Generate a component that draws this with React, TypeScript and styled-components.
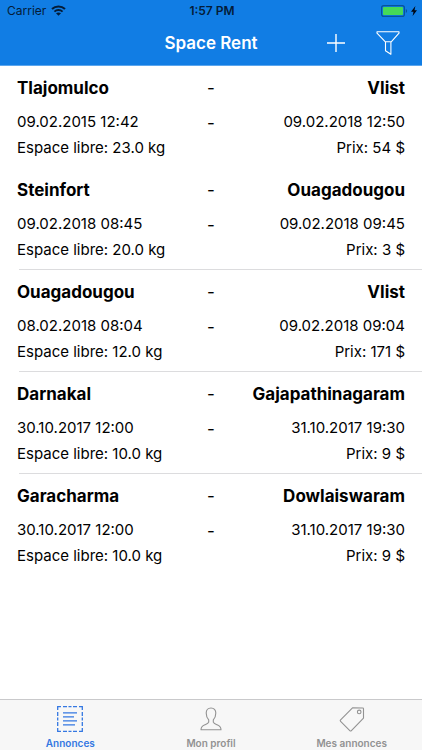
import React from "react";
import styled, { createGlobalStyle } from "styled-components";

const GlobalStyle = createGlobalStyle`
  *, *::before, *::after { box-sizing: border-box; }
  body {
    margin: 0;
    background: #ffffff;
    color: #000000;
    font-family: Inter, "Liberation Sans", sans-serif;
  }
`;

const Screen = styled.div`
  display: flex;
  flex-direction: column;
  height: 100vh;
`;

const Header = styled.header`
  flex: none;
  background: #117de4;
  border-bottom: 1px solid #5ba6ee;
`;

const StatusBar = styled.div`
  display: grid;
  grid-template-columns: 1fr auto 1fr;
  align-items: center;
  height: 21px;
  padding: 0 5px 0 7px;
  color: #041c38;
  font-size: 12px;
  line-height: 20px;
`;

const StatusGroup = styled.div<{ $end?: boolean }>`
  display: flex;
  align-items: center;
  gap: ${(p) => (p.$end ? 3 : 5)}px;
  justify-content: ${(p) => (p.$end ? "flex-end" : "flex-start")};
`;

const Clock = styled.time`
  font-weight: 600;
`;

const NavBar = styled.div`
  display: grid;
  grid-template-columns: 1fr auto 1fr;
  align-items: center;
  height: 44px;
  padding: 0 20px;
`;

const Title = styled.h1`
  grid-column: 2;
  margin: 0;
  color: #ffffff;
  font-size: 17px;
  font-weight: 600;
  line-height: 24px;
`;

const Actions = styled.div`
  display: flex;
  justify-content: flex-end;
  gap: 24px;
`;

const IconButton = styled.button`
  display: flex;
  align-items: center;
  justify-content: center;
  width: 28px;
  height: 32px;
  padding: 0;
  border: 0;
  background: none;
  color: #ffffff;
  cursor: pointer;
`;

const List = styled.ul`
  flex: 1;
  min-height: 0;
  overflow: auto;
  margin: 0;
  padding: 0;
  list-style: none;
`;

const Item = styled.li<{ $divided: boolean }>`
  padding: 11px 17px 9px;
  border-bottom: 1px solid;
  border-image: linear-gradient(
      to right,
      transparent 20px,
      ${(p) => (p.$divided ? "#dcdcde" : "transparent")} 20px
    ) 1;
`;

const Line = styled.div<{ $gap?: number }>`
  display: grid;
  grid-template-columns: 1fr auto 1fr;
  margin-top: ${(p) => p.$gap ?? 0}px;
  font-size: 15px;
  line-height: 20px;
`;

const Place = styled.strong<{ $end?: boolean }>`
  font-size: 17px;
  font-weight: 700;
  line-height: 22px;
  text-align: ${(p) => (p.$end ? "right" : "left")};
`;

const Detail = styled.span<{ $end?: boolean }>`
  grid-column: ${(p) => (p.$end ? 3 : 1)};
  text-align: ${(p) => (p.$end ? "right" : "left")};
`;

const Dash = styled.span`
  font-size: 17px;
  line-height: 22px;
`;

const TabBar = styled.nav`
  display: grid;
  grid-template-columns: repeat(3, 1fr);
  flex: none;
  height: 51px;
  border-top: 1px solid #c9c9cb;
  background: #f7f7f7;
`;

const Tab = styled.button<{ $active?: boolean }>`
  display: flex;
  flex-direction: column;
  align-items: center;
  gap: 4px;
  padding: 6px 0 0;
  border: 0;
  background: none;
  color: ${(p) => (p.$active ? "#3478e2" : "#929292")};
  font-family: inherit;
  font-size: 10px;
  font-weight: 600;
  line-height: 14px;
  cursor: pointer;
`;

const WifiIcon = () => (
  <svg width="15" height="11" viewBox="0 0 15 11" fill="none" stroke="currentColor" aria-hidden="true">
    <path d="M1 4C4.6.7 10.4.7 14 4" strokeWidth="2.1" />
    <path d="M3.4 6.6c2.3-2.1 5.9-2.1 8.2 0" strokeWidth="1.9" />
    <path d="M7.5 10.8 5 8.3c1.4-1.2 3.6-1.2 5 0z" fill="currentColor" stroke="none" />
  </svg>
);

const BatteryIcon = () => (
  <svg width="27" height="12" viewBox="0 0 27 12" aria-hidden="true">
    <rect x=".6" y=".6" width="22.8" height="10.8" rx="2.2" fill="none" stroke="#07539c" strokeWidth="1.2" />
    <rect x="2" y="2" width="20" height="8" rx=".8" fill="#45d957" />
    <path d="M24.8 4v4c1.7-.6 1.7-3.4 0-4z" fill="#07539c" />
  </svg>
);

const BoltIcon = () => (
  <svg width="6" height="10" viewBox="0 0 6 10" fill="#000814" aria-hidden="true">
    <path d="M4.4 0 0 5.8h2.5L1.6 10 6 4.2H3.5z" />
  </svg>
);

const PlusIcon = () => (
  <svg width="18" height="18" viewBox="0 0 18 18" stroke="currentColor" strokeWidth="1.4" aria-hidden="true">
    <path d="M9 0v18M0 9h18" />
  </svg>
);

const FunnelIcon = () => (
  <svg width="24" height="25" viewBox="0 0 24 25" fill="none" stroke="currentColor" strokeWidth="1.1" strokeLinejoin="round" aria-hidden="true">
    <path d="M1 .8h22v1.4l-7.8 8.6H9.4L1 2.2zM9.5 10.8v8.9l5.4 3.6V10.8" />
  </svg>
);

const ListIcon = () => (
  <svg width="26" height="26" viewBox="0 0 26 26" fill="none" stroke="currentColor" strokeWidth="1.3" aria-hidden="true">
    <path d="M.7 4V.7H4M22 .7h3.3V4M25.3 22v3.3H22M4 25.3H.7V22" />
    <path d="M6 .7h4M11.5.7h3M16 .7h4M6 25.3h4M11.5 25.3h3M16 25.3h4M.7 6v4M.7 11.5v3M.7 16v4M25.3 6v4M25.3 11.5v3M25.3 16v4" />
    <path d="M6 6.8h14M6 10.8h11M6 14.8h14M6 18.8h12" />
  </svg>
);

const PersonIcon = () => (
  <svg width="26" height="26" viewBox="0 0 26 26" fill="none" stroke="currentColor" strokeWidth="1.1" strokeLinejoin="round" aria-hidden="true">
    <path d="M13 2c-3 0-4.8 2-4.8 5 0 2.8.7 5 2.5 6.8v2.4c-.4 1.3-1.8 1.8-3.8 2.6C4.2 19.9 3 21 3 23.8h20c0-2.8-1.2-3.9-3.9-5-2-.8-3.4-1.3-3.8-2.6v-2.4c1.8-1.8 2.5-4 2.5-6.8 0-3-1.8-5-4.8-5z" />
  </svg>
);

const TagIcon = () => (
  <svg width="26" height="26" viewBox="0 0 26 26" fill="none" stroke="currentColor" strokeWidth="1.1" strokeLinejoin="round" aria-hidden="true">
    <path d="M13.5 1.8 23.8 2c.5 0 .7.3.7.8v9.3L12.4 24.6c-.6.6-1 .6-1.6 0L1.6 15.3c-.5-.5-.5-1 0-1.5z" />
    <circle cx="20.2" cy="5.9" r="1.8" />
  </svg>
);

interface Trip {
  from: string;
  to: string;
  departure: string;
  arrival: string;
  space: string;
  price: number;
  divided: boolean;
}

const trips: Trip[] = [
  { from: "Tlajomulco", to: "Vlist", departure: "09.02.2015 12:42", arrival: "09.02.2018 12:50", space: "23.0", price: 54, divided: false },
  { from: "Steinfort", to: "Ouagadougou", departure: "09.02.2018 08:45", arrival: "09.02.2018 09:45", space: "20.0", price: 3, divided: true },
  { from: "Ouagadougou", to: "Vlist", departure: "08.02.2018 08:04", arrival: "09.02.2018 09:04", space: "12.0", price: 171, divided: true },
  { from: "Darnakal", to: "Gajapathinagaram", departure: "30.10.2017 12:00", arrival: "31.10.2017 19:30", space: "10.0", price: 9, divided: true },
  { from: "Garacharma", to: "Dowlaiswaram", departure: "30.10.2017 12:00", arrival: "31.10.2017 19:30", space: "10.0", price: 9, divided: false },
];

const TripItem = ({ trip }: { trip: Trip }) => (
  <Item $divided={trip.divided}>
    <Line>
      <Place>{trip.from}</Place>
      <Dash>-</Dash>
      <Place $end>{trip.to}</Place>
    </Line>
    <Line $gap={13}>
      <Detail>{trip.departure}</Detail>
      <Dash>-</Dash>
      <Detail $end>{trip.arrival}</Detail>
    </Line>
    <Line $gap={4}>
      <Detail>Espace libre: {trip.space} kg</Detail>
      <Detail $end>Prix: {trip.price} $</Detail>
    </Line>
  </Item>
);

export default function App() {
  return (
    <Screen>
      <GlobalStyle />
      <Header>
        <StatusBar>
          <StatusGroup>
            <span>Carrier</span>
            <WifiIcon />
          </StatusGroup>
          <Clock>1:57 PM</Clock>
          <StatusGroup $end>
            <BatteryIcon />
            <BoltIcon />
          </StatusGroup>
        </StatusBar>
        <NavBar>
          <Title>Space Rent</Title>
          <Actions>
            <IconButton type="button" aria-label="Ajouter">
              <PlusIcon />
            </IconButton>
            <IconButton type="button" aria-label="Filtrer">
              <FunnelIcon />
            </IconButton>
          </Actions>
        </NavBar>
      </Header>
      <List>
        {trips.map((trip, index) => (
          <TripItem key={index} trip={trip} />
        ))}
      </List>
      <TabBar>
        <Tab type="button" $active aria-current="page">
          <ListIcon />
          Annonces
        </Tab>
        <Tab type="button">
          <PersonIcon />
          Mon profil
        </Tab>
        <Tab type="button">
          <TagIcon />
          Mes annonces
        </Tab>
      </TabBar>
    </Screen>
  );
}
